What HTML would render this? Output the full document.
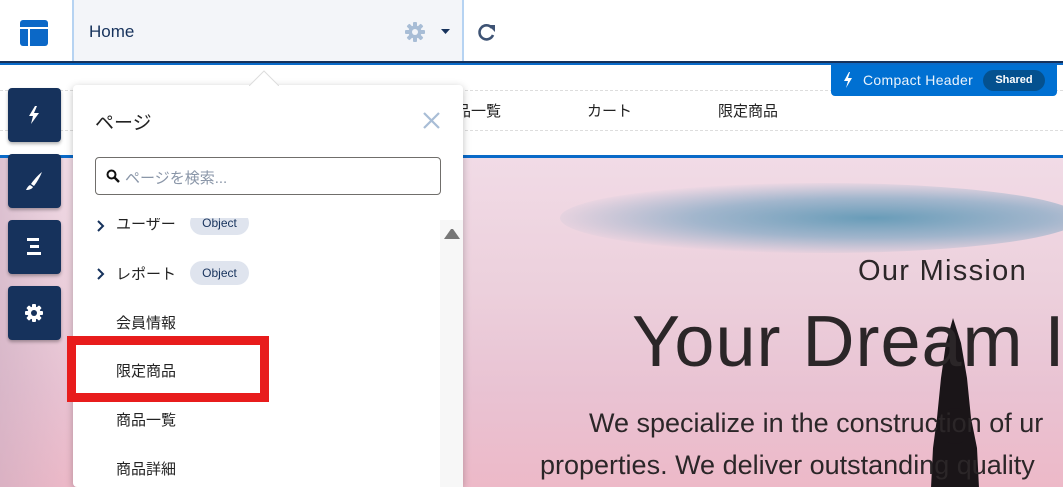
<!DOCTYPE html>
<html><head><meta charset="utf-8"><style>
*{margin:0;padding:0;box-sizing:border-box}
body{width:1063px;height:487px;overflow:hidden;position:relative;background:#fff;font-family:"Liberation Sans","Noto Sans CJK JP",sans-serif;color:#181818}
.abs{position:absolute}
.hero{left:0;top:158px;width:1063px;height:329px;background:linear-gradient(180deg,#f1dbe6 0%,#ecd0dc 40%,#e9c3d3 70%,#edb9c8 100%);overflow:hidden}
.btn{left:8px;width:53px;height:54px;background:#16325c;border-radius:4px;box-shadow:0 2px 3px rgba(0,0,0,.3)}
.nav{font-size:15px;color:#222;top:100px}
.pop{left:73px;top:85px;width:390px;height:402px;background:#fff;border-radius:4px;box-shadow:0 2px 8px rgba(0,0,0,.25)}
.item{font-size:15px;color:#222;position:absolute;left:43px}
.badge{position:absolute;left:117px;width:59px;height:24px;border-radius:12px;background:#dfe4ee;color:#16325c;font-size:12px;text-align:center;line-height:24px}
</style></head><body>
<svg class="abs" style="left:20px;top:20px" width="28" height="26"><rect x="0" y="0" width="28" height="26" rx="3" fill="#0b68c7"/><rect x="8" y="8" width="2" height="18" fill="#fff"/><rect x="0" y="7" width="28" height="2" fill="#fff"/></svg>
<div class="abs" style="left:72px;top:0;width:392px;height:61px;background:#f3f5f9;border-left:2px solid #b6d3f2;border-right:2px solid #b6d3f2"></div>
<div class="abs" style="left:89px;top:22px;font-size:17px;color:#16325c">Home</div>
<svg class="abs" style="left:405px;top:22px" width="20" height="20" viewBox="0 0 20 20"><g fill="#a8bdd6"><circle cx="10" cy="10" r="6.5"/><rect x="8" y="0" width="4" height="20" rx="1"/><rect x="0" y="8" width="20" height="4" rx="1"/><rect x="8" y="0" width="4" height="20" rx="1" transform="rotate(45 10 10)"/><rect x="8" y="0" width="4" height="20" rx="1" transform="rotate(-45 10 10)"/></g><circle cx="10" cy="10" r="3" fill="#f3f5f9"/></svg>
<svg class="abs" style="left:441px;top:29px" width="9" height="5"><path d="M0 0H9L4.5 5Z" fill="#16325c"/></svg>
<svg class="abs" style="left:476px;top:22px" width="22" height="20" viewBox="0 0 22 20"><path d="M16 6A7 7 0 1 0 17 13" fill="none" stroke="#3e5374" stroke-width="2.6"/><path d="M12 3H19V10Z" fill="#3e5374"/></svg>
<div class="abs" style="left:0;top:61px;width:1063px;height:2px;background:#16325c"></div>
<div class="abs" style="left:0;top:63px;width:1063px;height:2px;background:#0a6ac8"></div>
<div class="abs" style="left:0;top:90px;width:1063px;border-top:1px dashed #ddd"></div>
<div class="abs" style="left:0;top:130px;width:1063px;border-top:1px dashed #ddd"></div>
<div class="abs nav" style="left:441px">商品一覧</div>
<div class="abs nav" style="left:587px">カート</div>
<div class="abs nav" style="left:718px">限定商品</div>
<div class="abs" style="left:831px;top:65px;width:226px;height:31px;background:#0070d2;border-radius:0 0 4px 4px"></div>
<svg class="abs" style="left:843px;top:72px" width="10" height="16"><path d="M6 0L1 9H5L3 16L9 6H5L7 0Z" fill="#fff"/></svg>
<div class="abs" style="left:863px;top:72px;font-size:14px;color:#eaf3fc;letter-spacing:.3px">Compact Header</div>
<div class="abs" style="left:983px;top:70px;width:62px;height:21px;background:#04518f;border-radius:11px;color:#fff;font-size:11px;font-weight:bold;text-align:center;line-height:21px">Shared</div>
<div class="abs" style="left:0;top:155px;width:1063px;height:3px;background:#0a6ac8"></div>
<div class="abs hero">
<div class="abs" style="left:560px;top:25px;width:520px;height:70px;border-radius:50%;background:radial-gradient(ellipse at 60% 50%,rgba(90,150,180,.9) 0%,rgba(110,160,190,.6) 40%,rgba(200,190,215,0) 75%)"></div>
<div class="abs" style="left:0;top:0;width:70px;height:329px;background:linear-gradient(90deg,rgba(200,170,190,.5),rgba(0,0,0,0))"></div>
<svg class="abs" style="left:915px;top:160px" width="80" height="170" viewBox="0 0 80 170"><path d="M38 0L31 25L26 60L22 100L18 130L16 170H64L62 130L56 100L52 60L46 25Z" fill="#1a1518"/><ellipse cx="40" cy="108" rx="16" ry="18" fill="#1a1518"/></svg>
<div class="abs" style="left:858px;top:97px;font-size:29px;color:#2b2628;letter-spacing:1.3px">Our Mission</div>
<div class="abs" style="left:632px;top:143px;font-size:72px;color:#2b2628;white-space:nowrap;letter-spacing:1px">Your Dream I</div>
<div class="abs" style="left:589px;top:250px;font-size:27px;color:#2b2628;white-space:nowrap">We specialize in the construction of ur</div>
<div class="abs" style="left:540px;top:292px;font-size:27px;color:#2b2628;white-space:nowrap">properties. We deliver outstanding quality</div>
</div>
<div class="abs btn" style="top:88px"></div>
<svg class="abs" style="left:28px;top:106px" width="12" height="18"><path d="M7 0L1 10H5L3 18L11 7H6L9 0Z" fill="#fff"/></svg>
<div class="abs btn" style="top:154px"></div>
<svg class="abs" style="left:25px;top:171px" width="18" height="20"><path d="M17 1C12 5 8 10 6 13L9 15C12 11 15 6 17 1Z M5 14C3 15 2 17 1 19C4 19 7 18 8 16Z" fill="#fff"/></svg>
<div class="abs btn" style="top:220px"></div>
<svg class="abs" style="left:25px;top:236px" width="18" height="20"><rect x="2" y="2" width="12" height="3" fill="#fff"/><rect x="5" y="9" width="9" height="3" fill="#fff"/><rect x="2" y="16" width="14" height="3" fill="#fff"/></svg>
<div class="abs btn" style="top:286px"></div>
<svg class="abs" style="left:24px;top:303px" width="20" height="20" viewBox="0 0 20 20"><g fill="#fff"><circle cx="10" cy="10" r="6.5"/><rect x="8" y="1" width="4" height="18" rx="1"/><rect x="1" y="8" width="18" height="4" rx="1"/><rect x="8" y="1" width="4" height="18" rx="1" transform="rotate(45 10 10)"/><rect x="8" y="1" width="4" height="18" rx="1" transform="rotate(-45 10 10)"/></g><circle cx="10" cy="10" r="3" fill="#16325c"/></svg>
<div class="abs pop"></div>
<svg class="abs" style="left:249px;top:70px" width="30" height="16"><path d="M0 16L15 1L30 16" fill="#fff" stroke="#ddd" stroke-width="1"/></svg>
<div class="abs" style="left:95px;top:108px;font-size:19px;color:#222">ページ</div>
<svg class="abs" style="left:423px;top:112px" width="17" height="17"><path d="M1 1L16 16M16 1L1 16" stroke="#a8bdd6" stroke-width="2.2"/></svg>
<div class="abs" style="left:95px;top:157px;width:346px;height:38px;border:1px solid #706e6b;border-radius:4px"></div>
<svg class="abs" style="left:106px;top:169px" width="14" height="14"><circle cx="5.5" cy="5.5" r="4" fill="none" stroke="#111" stroke-width="2"/><path d="M8.5 8.5L13 13" stroke="#111" stroke-width="2.4"/></svg>
<div class="abs" style="left:125px;top:167px;font-size:15px;color:#8a96a8">ページを検索...</div>
<div class="abs" style="left:73px;top:218px;width:390px;height:269px;overflow:hidden">
<div class="abs" style="left:367px;top:2px;width:23px;height:270px;background:#f7f7f7"></div>
<svg class="abs" style="left:371px;top:10px" width="16" height="11"><path d="M0 11L7 1H9L16 11Z" fill="#777"/></svg>
<svg class="abs" style="left:23px;top:1px" width="9" height="14"><path d="M2 2L7 7L2 12" fill="none" stroke="#16325c" stroke-width="2"/></svg>
<div class="item" style="top:-5px">ユーザー</div>
<div class="badge" style="top:-7px">Object</div>
<svg class="abs" style="left:23px;top:49px" width="9" height="14"><path d="M2 2L7 7L2 12" fill="none" stroke="#16325c" stroke-width="2"/></svg>
<div class="item" style="top:45px">レポート</div>
<div class="badge" style="top:43px">Object</div>
<div class="item" style="top:94px">会員情報</div>
<div class="item" style="top:142px">限定商品</div>
<div class="item" style="top:191px">商品一覧</div>
<div class="item" style="top:240px">商品詳細</div>
</div>
<div class="abs" style="left:67px;top:336px;width:202px;height:66px;border:9px solid #e81c1c"></div>
</body></html>
